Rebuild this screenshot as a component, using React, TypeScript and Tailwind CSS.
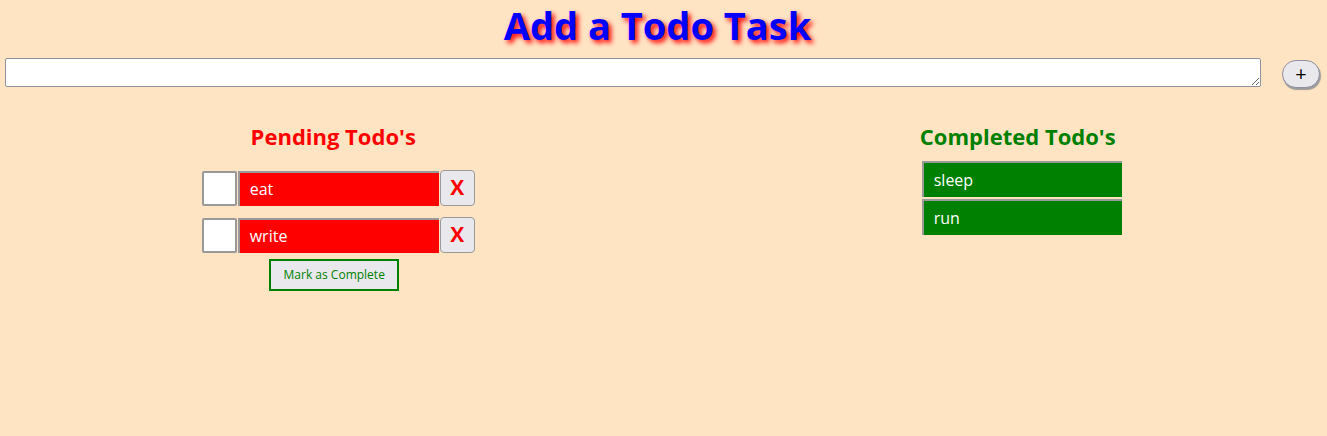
import { useState } from 'react';

const font = { fontFamily: '"Open Sans", "Noto Sans", sans-serif' };

const App = () => {
  const [text, setText] = useState('');
  const [pending] = useState(['eat', 'write']);
  const [done] = useState(['sleep', 'run']);

  return (
    <div className="min-h-[436px] w-full bg-[#ffe4c4]" style={font}>
      <h1 className="pr-[12px] pt-[1px] text-center text-[38px] font-bold leading-[48px] text-[#0000ff] [text-shadow:3px_3px_5px_#ff0000]">
        Add a Todo Task
      </h1>

      <div className="mt-[9px] flex items-start">
        <textarea
          value={text}
          onChange={(e) => setText(e.target.value)}
          className="ml-[5px] h-[29px] w-[1256px] rounded-[2px] border border-[#8f8f9d] bg-white"
        />
        <button className="ml-[21px] mt-[2px] flex h-[28px] w-[38px] items-center justify-center rounded-full border border-[#8f8f9d] bg-[#e9e9ed] text-[20px] leading-none text-black shadow-[1px_2px_1px_#9a9a9a]">
          +
        </button>
      </div>

      <div className="mt-[31px] flex">
        {/* Pending */}
        <div className="flex w-[668px] flex-col items-center">
          <h2 className="text-[22px] font-bold leading-[34px] text-[#ff0000]">Pending Todo's</h2>
          <div className="ml-[10px] mt-[17px] flex flex-col gap-[11px]">
            {pending.map((item) => (
              <div key={item} className="flex items-center">
                <div className="h-[35px] w-[35px] rounded-[2px] border-2 border-[#999] bg-white" />
                <div className="ml-[1px] flex h-[35px] w-[201px] items-center border-t-2 border-l-2 border-[#999] bg-[#ff0000] pl-[10px] text-[16px] text-white">
                  {item}
                </div>
                <button className="ml-[1px] flex h-[36px] w-[35px] items-center justify-center rounded-[4px] border border-[#999] bg-[#e9e9ed] text-[21px] font-bold text-[#ff0000]">
                  X
                </button>
              </div>
            ))}
          </div>
          <button className="ml-[2px] mt-[6px] h-[32px] w-[130px] border-2 border-[#008000] bg-[#e9e9ed] text-[12px] text-[#008000]">
            Mark as Complete
          </button>
        </div>

        {/* Completed */}
        <div className="ml-[42px] flex w-[620px] flex-col items-center">
          <h2 className="text-[22px] font-bold leading-[34px] text-[#008000]">Completed Todo's</h2>
          <div className="ml-[8px] mt-[8px] flex flex-col gap-[2px]">
            {done.map((item) => (
              <div
                key={item}
                className="flex h-[36px] w-[200px] items-center border-t-2 border-l-2 border-[#999] bg-[#008000] pl-[10px] text-[16px] text-white"
              >
                {item}
              </div>
            ))}
          </div>
        </div>
      </div>
    </div>
  );
};

export default App;
